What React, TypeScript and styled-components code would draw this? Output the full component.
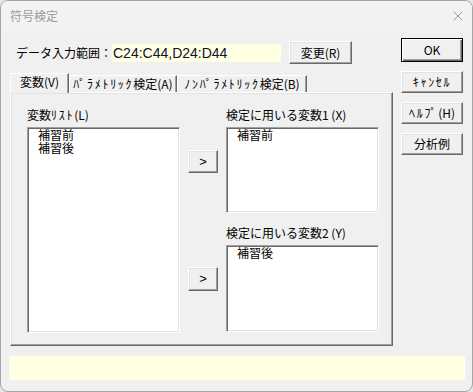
import React from "react";
import styled, { createGlobalStyle, css } from "styled-components";

const GlobalStyle = createGlobalStyle`
	html, body {
		margin: 0;
		padding: 0;
		background: #e6e6e6;
	}
	body {
		font-family: "Noto Sans CJK JP", "Noto Sans", sans-serif;
		font-size: 12px;
		color: #000;
	}
`;

// classic 3D edges
const raised = css`
	border: 1px solid;
	border-color: #fff #696969 #696969 #fff;
	box-shadow: inset -1px -1px #a0a0a0, inset 1px 1px #e3e3e3;
`;

const sunken = css`
	border: 1px solid;
	border-color: #a0a0a0 #fff #fff #a0a0a0;
	box-shadow: inset 1px 1px #696969, inset -1px -1px #e3e3e3;
`;

const Window = styled.div`
	width: 473px;
	height: 392px;
	box-sizing: border-box;
	border: 1px solid #a6a6a6;
	border-radius: 8px;
	overflow: hidden;
	background: #f0f0f0;
	display: flex;
	flex-direction: column;
`;

const TitleBar = styled.div`
	height: 30px;
	flex: none;
	background: #f3f3f3;
	display: flex;
	align-items: center;
	justify-content: space-between;
	padding: 0 9px 0 9px;
	.title {
		color: #9b9b9b;
		font-size: 12px;
		line-height: 14px;
	}
`;

// half-width katakana, spread a little to match the dialog font
const Kana = styled.span`
	letter-spacing: 1.7px;
`;

const Body = styled.div`
	display: flex;
	flex-direction: column;
	padding: 0 7px 0 8px;
`;

const TopRow = styled.div`
	display: flex;
	align-items: flex-start;
`;

const Main = styled.div`
	margin-left: 1px;
	width: 383px;
	padding-top: 10px;
`;

const DataRow = styled.div`
	display: flex;
	align-items: center;
	height: 23px;
	padding-left: 6px;
	.label {
		width: 96px;
		white-space: nowrap;
	}
`;

const RangeField = styled.div`
	width: 169px;
	height: 18px;
	box-sizing: border-box;
	background: #ffffe1;
	padding-left: 1px;
	font-family: "Liberation Sans", sans-serif;
	font-size: 14px;
	line-height: 18px;
	color: #101030;
	margin-right: 8px;
`;

const Button = styled.button<{ $w: number; $h: number; $default?: boolean }>`
	width: ${(p) => p.$w}px;
	height: ${(p) => p.$h}px;
	box-sizing: border-box;
	padding: 0;
	margin: 0;
	background: #f0f0f0;
	font-family: "Noto Sans CJK JP", sans-serif;
	font-size: 12px;
	font-weight: 400;
	line-height: 14px;
	color: #000;
	display: flex;
	align-items: center;
	justify-content: center;
	white-space: nowrap;
	${raised}
	${(p) =>
		p.$default &&
		css`
			border: 1px solid #000;
			box-shadow: inset 1px 1px #fff, inset -1px -1px #696969,
				inset -2px -2px #a0a0a0;
		`}
`;

const ArrowButton = styled(Button)<{ $gap?: number }>`
	margin-top: ${(p) => p.$gap ?? 0}px;
	font-family: "Liberation Sans", sans-serif;
	font-size: 13px;
`;

const TabStrip = styled.div`
	margin-top: 9px;
	height: 19px;
	display: flex;
	align-items: flex-end;
	position: relative;
	z-index: 1;
`;

const Tab = styled.div<{ $w: number; $active?: boolean }>`
	width: ${(p) => p.$w}px;
	height: ${(p) => (p.$active ? 20 : 17)}px;
	margin-bottom: ${(p) => (p.$active ? -1 : 0)}px;
	box-sizing: border-box;
	background: #f0f0f0;
	border-top: 1px solid #fff;
	border-left: 1px solid #fff;
	border-right: 1px solid #696969;
	box-shadow: inset -1px 0 #a0a0a0;
	display: flex;
	align-items: center;
	justify-content: center;
	padding-bottom: ${(p) => (p.$active ? 3 : 1)}px;
	line-height: 14px;
	white-space: nowrap;
`;

const Panel = styled.div`
	height: 254px;
	box-sizing: border-box;
	${raised}
	padding: 15px 0 0 16px;
	display: flex;
	gap: 8px;
`;

const Column = styled.div<{ $top?: number }>`
	display: flex;
	flex-direction: column;
	padding-top: ${(p) => p.$top ?? 0}px;
`;

const FieldLabel = styled.div<{ $gap?: number }>`
	line-height: 14px;
	margin-top: ${(p) => p.$gap ?? 0}px;
	margin-bottom: 5px;
	white-space: nowrap;
`;

const ListBox = styled.div<{ $h: number }>`
	width: 153px;
	height: ${(p) => p.$h}px;
	box-sizing: border-box;
	background: #fff;
	${sunken}
	padding: 0 0 0 10px;
`;

const ListItem = styled.div`
	line-height: 13px;
	height: 13px;
`;

const Side = styled.div`
	margin-left: 8px;
	width: 62px;
	padding-top: 7px;
	display: flex;
	flex-direction: column;
	gap: 9px;
`;

const StatusBar = styled.div`
	margin-top: 10px;
	height: 24px;
	background: #ffffe1;
`;

const CloseIcon = () => (
	<svg width="10" height="10" viewBox="0 0 10 10">
		<path d="M0.5 0.5 L9.5 9.5 M9.5 0.5 L0.5 9.5" stroke="#9a9a9a" strokeWidth="1" />
	</svg>
);

const App = () => {
	return (
		<>
			<GlobalStyle />
			<Window>
				<TitleBar>
					<span className='title'>符号検定</span>
					<CloseIcon />
				</TitleBar>
				<Body>
					<TopRow>
						<Main>
							<DataRow>
								<span className='label'>データ入力範囲：</span>
								<RangeField>C24:C44,D24:D44</RangeField>
								<Button $w={63} $h={23}>変更(R)</Button>
							</DataRow>
							<TabStrip>
								<Tab $w={59} $active>
									変数(V)
								</Tab>
								<Tab $w={108}>
									<Kana>ﾊﾟﾗﾒﾄﾘｯｸ</Kana>検定(A)
								</Tab>
								<Tab $w={130}>
									<Kana>ﾉﾝﾊﾟﾗﾒﾄﾘｯｸ</Kana>検定(B)
								</Tab>
							</TabStrip>
							<Panel>
								<Column>
									<FieldLabel>
										変数<Kana>ﾘｽﾄ</Kana>(L)
									</FieldLabel>
									<ListBox $h={206}>
										<ListItem>補習前</ListItem>
										<ListItem>補習後</ListItem>
									</ListBox>
								</Column>
								<Column $top={42}>
									<ArrowButton $w={30} $h={23}>&gt;</ArrowButton>
									<ArrowButton $w={30} $h={24} $gap={94}>
										&gt;
									</ArrowButton>
								</Column>
								<Column>
									<FieldLabel>検定に用いる変数1 (X)</FieldLabel>
									<ListBox $h={86}>
										<ListItem>補習前</ListItem>
									</ListBox>
									<FieldLabel $gap={13}>検定に用いる変数2 (Y)</FieldLabel>
									<ListBox $h={87}>
										<ListItem>補習後</ListItem>
									</ListBox>
								</Column>
							</Panel>
						</Main>
						<Side>
							<Button $w={62} $h={24} $default>
								OK
							</Button>
							<Button $w={62} $h={22}>
								<Kana>ｷｬﾝｾﾙ</Kana>
							</Button>
							<Button $w={62} $h={22}>
								<Kana>ﾍﾙﾌﾟ</Kana>(H)
							</Button>
							<Button $w={62} $h={22}>分析例</Button>
						</Side>
					</TopRow>
					<StatusBar />
				</Body>
			</Window>
		</>
	);
};

export default App;
